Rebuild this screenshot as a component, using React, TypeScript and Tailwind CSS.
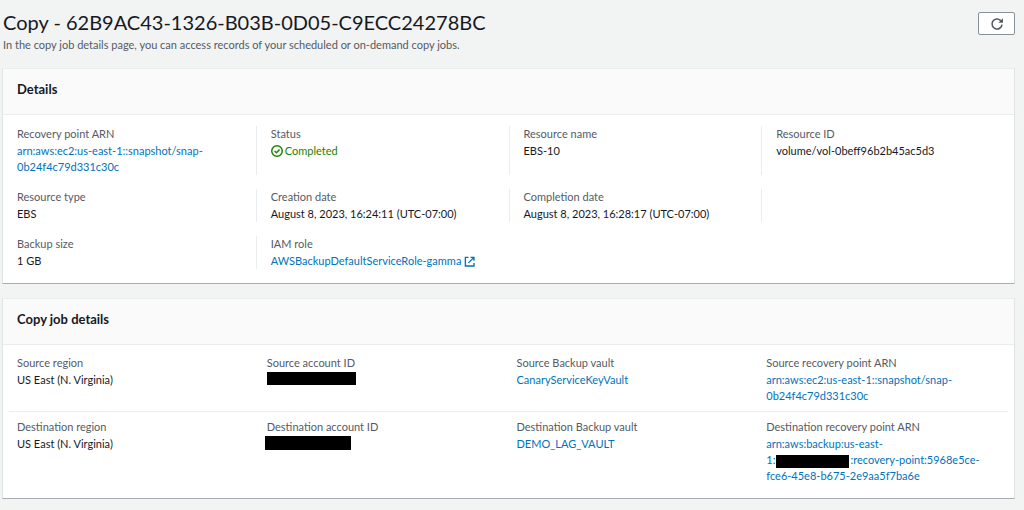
import { ReactNode } from 'react'

interface FieldProps {
  label: string
  children?: ReactNode
}

function Field({ label, children }: FieldProps) {
  return (
    <div className="min-w-0">
      <dt className="mb-px text-[#545b64]">{label}</dt>
      <dd className="text-[#16191f]">{children}</dd>
    </div>
  )
}

function TextLink({ children }: { children: ReactNode }) {
  return (
    <a href="#" className="text-[#0073bb] hover:underline">
      {children}
    </a>
  )
}

function Panel({ title, children }: { title: string; children: ReactNode }) {
  return (
    <section className="border border-t-[#eaeded] border-x-[#e0e4e4] border-b-[#a5adb0] bg-white">
      <header className="border-b border-[#eaeded] bg-[#fafafa] px-3.5 pt-2.5 pb-[15px]">
        <h2 className="text-[13px] leading-5 font-bold text-[#16191f]">{title}</h2>
      </header>
      {children}
    </section>
  )
}

function RefreshIcon() {
  return (
    <svg viewBox="0 0 14 14" className="size-3.5" aria-hidden="true">
      <path d="M12 7.6A5 5 0 1 1 10.4 3.3L11.6 4.4" fill="none" stroke="#545b64" strokeWidth="1.6" />
      <path d="M13 1.2V5.8H8.4z" fill="#545b64" />
    </svg>
  )
}

function SuccessIcon() {
  return (
    <svg viewBox="0 0 16 16" className="size-3" fill="none" stroke="currentColor" strokeWidth="2" aria-hidden="true">
      <circle cx="8" cy="8" r="7" />
      <path d="M4.8 8l2.4 2.4 4.2-4.4" />
    </svg>
  )
}

function ExternalIcon() {
  return (
    <svg viewBox="0 0 16 16" className="size-[11px]" fill="none" stroke="currentColor" strokeWidth="2" aria-hidden="true">
      <path d="M6.5 2H2v12.5h12.5V10" />
      <path d="M9.5 2h5v5M14.5 2l-8 8" />
    </svg>
  )
}

export default function App() {
  const cell = 'border-l border-[#eaeded] pl-3.5'

  return (
    <main className="min-h-screen bg-[#f2f3f3] pt-2.5 pr-[9px] pb-2.5 pl-0.5 font-['Lato','Noto_Sans',sans-serif] text-[11px] leading-4">
      <div className="mb-[15px] flex items-start justify-between">
        <div className="pl-px">
          <h1 className="text-[20px] leading-6 text-[#16191f]">Copy - 62B9AC43-1326-B03B-0D05-C9ECC24278BC</h1>
          <p className="mt-[3px] text-[#545b64]">
            In the copy job details page, you can access records of your scheduled or on-demand copy jobs.
          </p>
        </div>
        <button
          type="button"
          aria-label="Refresh"
          className="mt-0.5 flex h-[23px] w-[37px] items-center justify-center rounded-xs border border-[#879196] bg-white"
        >
          <RefreshIcon />
        </button>
      </div>

      <div className="space-y-3.5">
        <Panel title="Details">
          <div className="space-y-3.5 pt-[11px] pb-3.5">
            <dl className="grid grid-cols-4">
              <div className="pr-10 pl-3.5">
                <Field label="Recovery point ARN">
                  <TextLink>arn:aws:ec2:us-east-1::snapshot/snap-0b24f4c79d331c30c</TextLink>
                </Field>
              </div>
              <div className={cell}>
                <Field label="Status">
                  <span className="flex items-center gap-0.5 text-[#1d8102]">
                    <SuccessIcon />
                    Completed
                  </span>
                </Field>
              </div>
              <div className={cell}>
                <Field label="Resource name">EBS-10</Field>
              </div>
              <div className={cell}>
                <Field label="Resource ID">volume/vol-0beff96b2b45ac5d3</Field>
              </div>
            </dl>
            <dl className="grid grid-cols-4">
              <div className="px-3.5">
                <Field label="Resource type">EBS</Field>
              </div>
              <div className={cell}>
                <Field label="Creation date">August 8, 2023, 16:24:11 (UTC-07:00)</Field>
              </div>
              <div className={cell}>
                <Field label="Completion date">August 8, 2023, 16:28:17 (UTC-07:00)</Field>
              </div>
              <div className={cell} />
            </dl>
            <dl className="grid grid-cols-4">
              <div className="px-3.5">
                <Field label="Backup size">1 GB</Field>
              </div>
              <div className={cell}>
                <Field label="IAM role">
                  <a href="#" className="flex items-center gap-[3px] text-[#0073bb] hover:underline">
                    AWSBackupDefaultServiceRole-gamma
                    <ExternalIcon />
                  </a>
                </Field>
              </div>
            </dl>
          </div>
        </Panel>

        <Panel title="Copy job details">
          <div className="px-1.5 pt-2.5 pb-3.5">
            <dl className="grid grid-cols-4 border-b border-[#eaeded] pb-[7px] *:px-2">
              <Field label="Source region">US East (N. Virginia)</Field>
              <Field label="Source account ID">
                <span className="mt-px block h-[13px] w-[89px] bg-black" />
              </Field>
              <Field label="Source Backup vault">
                <TextLink>CanaryServiceKeyVault</TextLink>
              </Field>
              <Field label="Source recovery point ARN">
                <TextLink>arn:aws:ec2:us-east-1::snapshot/snap-0b24f4c79d331c30c</TextLink>
              </Field>
            </dl>
            <dl className="grid grid-cols-4 pt-[7px] *:px-2">
              <Field label="Destination region">US East (N. Virginia)</Field>
              <Field label="Destination account ID">
                <span className="-ml-0.5 block h-3.5 w-[86px] bg-black" />
              </Field>
              <Field label="Destination Backup vault">
                <TextLink>DEMO_LAG_VAULT</TextLink>
              </Field>
              <Field label="Destination recovery point ARN">
                <TextLink>
                  arn:aws:backup:us-east-
                  <br />
                  1:
                  <span className="mx-px inline-block h-[13px] w-[73px] bg-black align-middle" />
                  :recovery-point:5968e5ce-
                  <br />
                  fce6-45e8-b675-2e9aa5f7ba6e
                </TextLink>
              </Field>
            </dl>
          </div>
        </Panel>
      </div>
    </main>
  )
}
